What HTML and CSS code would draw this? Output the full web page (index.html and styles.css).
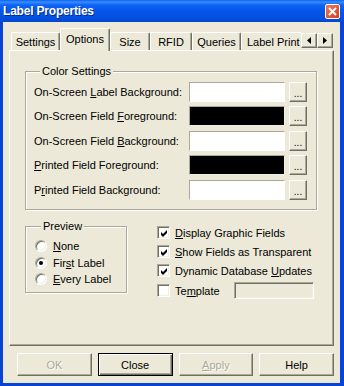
FILE: index.html
```html
<!DOCTYPE html>
<html lang="en">

<head>
  <meta charset="UTF-8">
  <title>Label Properties</title>
  <link rel="stylesheet" href="styles.css">
</head>

<body>
  <div class="window">
    <div class="titlebar">
      <span class="title">Label Properties</span>
      <span class="close">
        <svg width="9" height="9" viewBox="0 0 9 9"><path d="M1 1 L8 8 M8 1 L1 8" stroke="#fff" stroke-width="2"/></svg>
      </span>
    </div>

    <div class="client">
      <div class="tabbar">
        <div class="tabs">
          <div class="tab w-settings">Settings</div>
          <div class="tab active w-options">Options</div>
          <div class="tab w-size">Size</div>
          <div class="tab w-rfid">RFID</div>
          <div class="tab w-queries">Queries</div>
          <div class="tab w-print">Label Print</div>
        </div>
        <div class="spin">
          <svg width="4" height="7" viewBox="0 0 4 7"><path d="M4 0 L0 3.5 L4 7 Z" fill="#000"/></svg>
        </div>
        <div class="spin">
          <svg width="4" height="7" viewBox="0 0 4 7"><path d="M0 0 L4 3.5 L0 7 Z" fill="#000"/></svg>
        </div>
      </div>

      <div class="panel">
        <!-- Farbeinstellungen -->
        <div class="group colors">
          <div class="group-title">Color Settings</div>
          <div class="color-row">
            <span class="color-label">On-Screen <u>L</u>abel Background:</span>
            <span class="swatch"></span>
            <span class="btn dots">...</span>
          </div>
          <div class="color-row">
            <span class="color-label">On-Screen Field <u>F</u>oreground:</span>
            <span class="swatch black"></span>
            <span class="btn dots">...</span>
          </div>
          <div class="color-row">
            <span class="color-label">On-Screen Field <u>B</u>ackground:</span>
            <span class="swatch"></span>
            <span class="btn dots">...</span>
          </div>
          <div class="color-row">
            <span class="color-label"><u>P</u>rinted Field Foreground:</span>
            <span class="swatch black"></span>
            <span class="btn dots">...</span>
          </div>
          <div class="color-row">
            <span class="color-label">P<u>r</u>inted Field Background:</span>
            <span class="swatch"></span>
            <span class="btn dots">...</span>
          </div>
        </div>

        <div class="lower">
          <div class="group preview">
            <div class="group-title">Preview</div>
            <div class="radio-row"><span class="radio"></span><u>N</u>one</div>
            <div class="radio-row"><span class="radio on"></span>Fir<u>s</u>t Label</div>
            <div class="radio-row"><span class="radio"></span><u>E</u>very Label</div>
          </div>

          <div class="checks">
            <div class="check-row">
              <span class="check on"><svg width="9" height="9" viewBox="0 0 9 9"><path d="M1 3 L3 5 L7 1 L7 4 L3 8 L1 6 Z" fill="#000"/></svg></span>
              <span><u>D</u>isplay Graphic Fields</span>
            </div>
            <div class="check-row">
              <span class="check on"><svg width="9" height="9" viewBox="0 0 9 9"><path d="M1 3 L3 5 L7 1 L7 4 L3 8 L1 6 Z" fill="#000"/></svg></span>
              <span><u>S</u>how Fields as Transparent</span>
            </div>
            <div class="check-row">
              <span class="check on"><svg width="9" height="9" viewBox="0 0 9 9"><path d="M1 3 L3 5 L7 1 L7 4 L3 8 L1 6 Z" fill="#000"/></svg></span>
              <span>Dynamic Database <u>U</u>pdates</span>
            </div>
            <div class="check-row template">
              <span class="check"></span>
              <span>Te<u>m</u>plate</span>
              <span class="field"></span>
            </div>
          </div>
        </div>
      </div>

      <div class="actions">
        <span class="btn push disabled">OK</span>
        <span class="btn push default">Close</span>
        <span class="btn push disabled"><u>A</u>pply</span>
        <span class="btn push">Help</span>
      </div>
    </div>
  </div>
</body>

</html>
```

FILE: styles.css
```css
body {
  margin: 0;
  font-family: 'Liberation Sans', Arial, sans-serif;
  font-size: 11px;
  color: #000;
  background: #ece9d8;
}

.window {
  width: 344px;
  height: 386px;
  background: #0843d8;
  display: flex;
  flex-direction: column;
}

.titlebar {
  height: 22px;
  display: flex;
  align-items: center;
  justify-content: space-between;
  padding: 0 4px 0 3px;
  background: linear-gradient(#0a62f2 0, #3a8cff 2px, #0e63f4 5px, #0556ea 11px, #0452e2 17px, #0347d2 22px);
}

.title {
  color: #fff;
  font-weight: bold;
  font-size: 12px;
  letter-spacing: -0.2px;
  text-shadow: 1px 1px 0 #0a2a8c;
}

.close {
  width: 15px;
  height: 15px;
  box-sizing: border-box;
  border: 1px solid #fff;
  border-radius: 2px;
  background: linear-gradient(135deg, #ea7a5e, #d6401f);
  display: flex;
  align-items: center;
  justify-content: center;
  margin-top: 1px;
}

.client {
  flex: 1;
  margin: 0 4px 3px 3px;
  background: #ece9d8;
  padding: 6px 6px 0 6px;
}

/* Reiter */
.tabbar {
  display: flex;
  align-items: flex-end;
  height: 22px;
  padding-left: 2px;
}

.tabs {
  display: flex;
  align-items: flex-end;
  width: 290px;
  overflow: hidden;
  height: 23px;
  margin-bottom: -1px;
  position: relative;
  z-index: 1;
}

.tab {
  flex: none;
  height: 18px;
  box-sizing: border-box;
  border-top: 1px solid #fff;
  border-left: 1px solid #fff;
  border-right: 1px solid #716f64;
  box-shadow: inset -1px 0 0 #aca899;
  border-radius: 2px 2px 0 0;
  text-align: center;
  line-height: 18px;
  margin-bottom: 1px;
  background: #ece9d8;
}

.tab.active {
  height: 23px;
  margin-bottom: 0;
  line-height: 20px;
}

.w-settings { width: 49px; }
.w-options { width: 50px; }
.w-size { width: 40px; }
.w-rfid { width: 42px; }
.w-queries { width: 49px; }
.w-print { width: 70px; text-align: left; padding-left: 5px; }

.spin {
  width: 16px;
  height: 15px;
  box-sizing: border-box;
  border-top: 1px solid #fff;
  border-left: 1px solid #fff;
  border-right: 1px solid #716f64;
  border-bottom: 1px solid #716f64;
  box-shadow: inset -1px -1px 0 #aca899;
  display: flex;
  align-items: center;
  justify-content: center;
  margin-bottom: 2px;
}

.panel {
  height: 296px;
  box-sizing: border-box;
  border-top: 1px solid #fff;
  border-left: 1px solid #fff;
  border-right: 1px solid #716f64;
  border-bottom: 1px solid #716f64;
  box-shadow: inset -1px -1px 0 #aca899;
  padding: 20px 0 0 15px;
}

/* Gruppenrahmen */
.group {
  border: 1px solid #aca899;
  box-shadow: inset 1px 1px 0 #fff, 1px 1px 0 #fff;
  box-sizing: border-box;
}

.group-title {
  display: table;
  background: #ece9d8;
  padding: 0 2px;
  margin: -7px 0 0 6px;
  line-height: 13px;
}

.colors {
  width: 292px;
  height: 139px;
  padding: 0 0 0 8px;
}

.colors .group-title {
  margin-bottom: -1px;
}

.color-row {
  display: flex;
  align-items: center;
  height: 20px;
  margin-top: 4.5px;
}

.color-label {
  width: 155px;
}

.swatch {
  width: 96px;
  height: 20px;
  box-sizing: border-box;
  background: #fff;
  border-top: 1px solid #aca899;
  border-left: 1px solid #aca899;
  border-right: 1px solid #fff;
  border-bottom: 1px solid #fff;
}

.swatch.black {
  background: #000;
  border-right-color: #f1efe2;
  border-bottom-color: #f1efe2;
}

.btn {
  box-sizing: border-box;
  border-top: 1px solid #fff;
  border-left: 1px solid #fff;
  border-right: 1px solid #716f64;
  border-bottom: 1px solid #716f64;
  box-shadow: inset -1px -1px 0 #aca899;
  background: #ece9d8;
  display: flex;
  align-items: center;
  justify-content: center;
}

.dots {
  width: 18px;
  height: 20px;
  margin-left: 4px;
  font-size: 10px;
  padding-top: 3px;
}

.lower {
  display: flex;
  margin-top: 16px;
}

.preview {
  width: 102px;
  height: 67px;
  padding-left: 9px;
}

.preview .group-title {
  margin-bottom: 5px;
}

.radio-row {
  display: flex;
  align-items: center;
  height: 16.5px;
}

.radio {
  width: 12px;
  height: 12px;
  box-sizing: border-box;
  border-radius: 50%;
  background: #fff;
  border: 1px solid;
  border-color: #aca899 #fff #fff #aca899;
  box-shadow: inset 1px 1px 0 #716f64, inset -1px -1px 0 #f1efe2;
  margin-right: 6px;
  display: flex;
  align-items: center;
  justify-content: center;
}

.radio.on::after {
  content: "";
  width: 4px;
  height: 4px;
  border-radius: 50%;
  background: #000;
}

.checks {
  width: 157px;
  margin-left: 30px;
  display: flex;
  flex-direction: column;
  gap: 6px;
}

.check-row {
  display: flex;
  align-items: center;
  height: 13px;
}

.check {
  width: 13px;
  height: 13px;
  box-sizing: border-box;
  background: #fff;
  border: 1px solid;
  border-color: #aca899 #fff #fff #aca899;
  box-shadow: inset 1px 1px 0 #716f64, inset -1px -1px 0 #f1efe2;
  margin-right: 5px;
  display: flex;
  align-items: center;
  justify-content: center;
  padding: 1px 0 0 1px;
}

.template {
  height: 17px;
  margin-top: -1px;
}

.field {
  width: 80px;
  height: 17px;
  box-sizing: border-box;
  margin-left: auto;
  border: 1px solid;
  border-color: #aca899 #fff #fff #aca899;
  box-shadow: inset 1px 1px 0 #716f64, inset -1px -1px 0 #f1efe2;
}

/* Schaltflächen */
.actions {
  display: flex;
  gap: 6px;
  padding-left: 8px;
  margin-top: 7px;
}

.push {
  width: 75px;
  height: 23px;
}

.push.default {
  border: 1px solid #000;
  box-shadow: inset 1px 1px 0 #fff, inset -1px -1px 0 #716f64, inset -2px -2px 0 #aca899;
}

.push.disabled {
  color: #aca899;
  text-shadow: 1px 1px 0 #fff;
}
```
